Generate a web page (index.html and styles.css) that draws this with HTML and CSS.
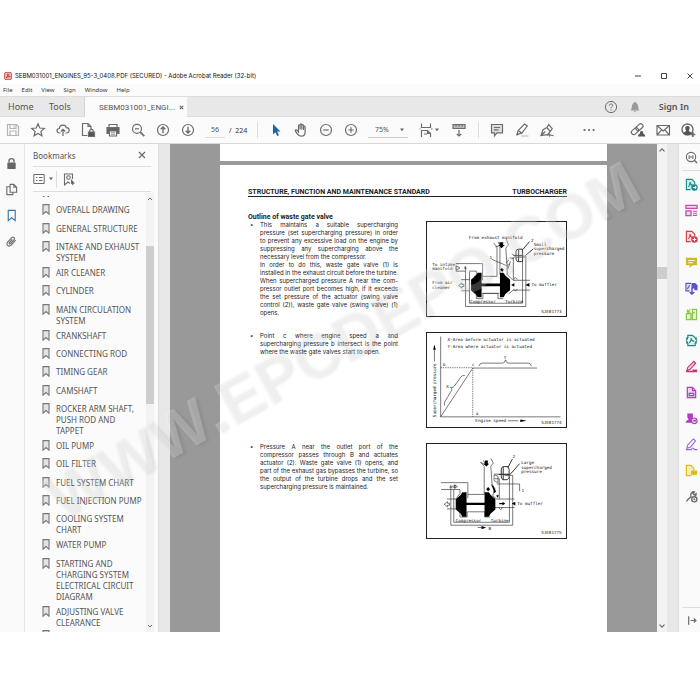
FILE: index.html
```html
<!DOCTYPE html>
<html lang="en">
<head>
<meta charset="utf-8">
<title>SEBM031001_ENGINES_95-3_0408.PDF (SECURED) - Adobe Acrobat Reader (32-bit)</title>
<link rel="stylesheet" href="styles.css">
</head>
<body>
<svg class="defs" aria-hidden="true">
  <symbol id="bm" viewBox="0 0 8 11"><path d="M1 .6h6v9.6L4 7.6 1 10.2z" fill="#e4e4e4" stroke="#777" stroke-width="1.1"/></symbol>
  <symbol id="caret" viewBox="0 0 6 4"><path d="M1 .5h4L3 3.2z" fill="#666"/></symbol>
</svg>
<div class="app">
  <header class="titlebar">
    <svg class="logo" viewBox="0 0 10 10"><rect x=".5" y=".5" width="9" height="9" rx="2" fill="#f3b0aa" stroke="#b5453f"/><path d="M2.5 7.3C4.5 6.500 5 4 4.800 2.500c1 2.500 1.800 3.300 3 3.300C6 5.500 4 6 2.500 7.300z" fill="none" stroke="#b02a25" stroke-width=".9"/></svg>
    <h1>SEBM031001_ENGINES_95-3_0408.PDF (SECURED) - Adobe Acrobat Reader (32-bit)</h1>
    <div class="winbtns">
      <button aria-label="Minimize"><svg viewBox="0 0 8 8"><path d="M1 4h6"/></svg></button>
      <button aria-label="Maximize"><svg viewBox="0 0 8 8"><path d="M1.500 1.500h5v5h-5z"/></svg></button>
      <button aria-label="Close"><svg viewBox="0 0 8 8"><path d="M1.500 1.500l5 5M6.500 1.500l-5 5"/></svg></button>
    </div>
  </header>
  <nav class="menubar">
    <button>File</button><button>Edit</button><button>View</button><button>Sign</button><button>Window</button><button>Help</button>
  </nav>
  <div class="tabs">
    <button class="tab home">Home</button>
    <button class="tab tools">Tools</button>
    <div class="tab active"><span>SEBM031001_ENGI...</span><button aria-label="Close tab"><svg viewBox="0 0 6 6"><path d="M1 1l4 4M5 1l-4 4"/></svg></button></div>
    <div class="account">
      <button aria-label="Help"><svg class="i14" viewBox="0 0 14 14"><circle cx="7" cy="7" r="5.600"/><path d="M5.400 5.600c0-2.200 3.300-2.100 3.300-.2C8.700 6.700 7 6.700 7 8.200M7 9.300v1.200"/></svg></button>
      <button aria-label="Notifications"><svg class="i14" viewBox="0 0 14 14"><path d="M2.500 10.500c1.300-1 1-3 1.500-4.800C4.400 4 5.500 3 6.200 2.800V2h1.600v.8C8.500 3 9.600 4 10 5.700c.5 1.800.2 3.800 1.500 4.800zM5.700 11.300h2.600L7 12.500z" fill="#999" stroke="none"/></svg></button>
      <button class="signin">Sign In</button>
    </div>
  </div>
  <div class="toolbar">
    <div class="group">
      <button aria-label="Save"><svg class="light" viewBox="0 0 16 16"><path d="M2.500 2.500h9l2 2v9h-11zM5 2.500v4h6v-4M5 13.500v-4.500h6v4.500M9 3.500v2"/></svg></button>
      <button aria-label="Star"><svg viewBox="0 0 16 16"><path d="M8 1.800l1.800 4.200 4.500.4-3.400 3 1 4.400L8 11.500l-3.900 2.300 1-4.400-3.400-3 4.500-.4z"/></svg></button>
      <button aria-label="Cloud upload"><svg viewBox="0 0 16 16"><path d="M5.500 11H4.600C1.200 11 1.200 6.700 4.300 6.500 4.500 2.200 10.500 2 11.300 5.600c3.800 0 3.800 5.400.2 5.400h-1M8 14V7.500M5.800 9.500L8 7.300l2.200 2.200"/></svg></button>
      <button aria-label="Protected file"><svg viewBox="0 0 16 16"><path d="M7.500 13.500h-5v-12h5.500l3 3v3M8 1.500v3h3"/><path d="M8.500 10h6v4.500h-6z" fill="#555"/><path d="M9.700 10V8.700c0-1.800 3.500-1.800 3.500 0V10"/></svg></button>
      <button aria-label="Print"><svg viewBox="0 0 16 16"><path d="M4 5V2.500h8V5"/><path d="M2 5.500h12v6H2z" fill="#666"/><path d="M4.500 9h7v5h-7z" fill="#fff"/><path d="M6 10.700h4M6 12.300h4" stroke-width=".7"/></svg></button>
      <button aria-label="Find"><svg viewBox="0 0 16 16"><circle cx="7" cy="6.800" r="4.500"/><path d="M10.300 10.200l4 4" stroke-width="1.700"/><path d="M5 6.800h4"/></svg></button>
      <button aria-label="Previous page"><svg viewBox="0 0 16 16"><circle cx="8" cy="8" r="5.500"/><path d="M8 11.200V5M5.700 7.300L8 5l2.300 2.300" stroke-width="1.400"/></svg></button>
      <button aria-label="Next page"><svg viewBox="0 0 16 16"><circle cx="8" cy="8" r="5.500"/><path d="M8 4.800V11M5.700 8.700L8 11l2.300-2.300" stroke-width="1.400"/></svg></button>
    </div>
    <div class="pager"><input aria-label="Page number" value="56"><span>/&nbsp; 224</span></div>
    <div class="group line">
      <button aria-label="Select"><svg viewBox="0 0 16 16"><path d="M5 2v10.500l2.400-2.200 1.800 3.800 1.800-.8-1.800-3.700h3.300z" fill="#1d66a5" stroke="none"/></svg></button>
      <button aria-label="Hand"><svg viewBox="0 0 16 16"><path d="M5.500 9V3.800c0-1.200 1.600-1.200 1.600 0V7.500 2.800c0-1.200 1.700-1.200 1.700 0v4.700-4c0-1.200 1.700-1.200 1.700 0V8 5c0-1.200 1.600-1.200 1.600 0v5.200c0 2.600-1.600 4-4 4-2.300 0-3-1-4-2.500L2.200 8.800c.2-1.300 1.600-1 2.200-.2L5.500 10z"/></svg></button>
      <button aria-label="Zoom out"><svg viewBox="0 0 16 16"><circle cx="8" cy="8" r="5.500"/><path d="M5.300 8h5.400"/></svg></button>
      <button aria-label="Zoom in"><svg viewBox="0 0 16 16"><circle cx="8" cy="8" r="5.500"/><path d="M5.300 8h5.400M8 5.300v5.400"/></svg></button>
    </div>
    <div class="zoom"><select aria-label="Zoom level"><option>75%</option></select><svg class="caret"><use href="#caret"/></svg></div>
    <div class="group view">
      <button class="fit" aria-label="Fit page"><svg viewBox="0 0 16 16"><path d="M3.500 1.500v4h9v-4M3.500 15V8.500h6l3 3V15M9.500 8.500v3h3M1.500 7h1M13 7h1.500M6 12h3"/></svg><svg class="caret"><use href="#caret"/></svg></button>
      <button aria-label="Scroll mode"><svg viewBox="0 0 16 16"><path d="M2 2.500h12v4H2z" fill="#bbb"/><path d="M5 2.500v2M8 2.500v2M11 2.500v2M8 8v6M5.800 12L8 14l2.200-2"/></svg></button>
    </div>
    <div class="group line">
      <button aria-label="Comment"><svg viewBox="0 0 16 16"><path d="M2.500 2.500h11v8.300H8l-2.500 3v-3h-3z" fill="#ddd"/><path d="M5 5.500h6M5 7.800h4.500"/></svg></button>
      <button aria-label="Highlight"><svg viewBox="0 0 16 16"><path d="M3 12.500l1.200-4L10.500 2l2.800 2-5.500 7.200z"/><path d="M5 9l2.500 2M2.500 13l2-1" stroke-width="1.500"/><path d="M7 14h7.500" stroke="#ccc" stroke-width="1.500"/></svg></button>
      <button aria-label="Sign"><svg viewBox="0 0 16 16"><path d="M2 13.500L4 7.700l4-2.200 3.300 4-2.700 3.200zM8 5.500l1.700-3 3.500 4-1.900 3M2 13.500l4.300-4M8.600 13.700c1-1.800 2-2.200 2.200 0 1-1.300 1.300 0 3.700 0"/></svg></button>
    </div>
    <button class="more" aria-label="More tools"><svg viewBox="0 0 16 16"><path d="M3.500 8h.1M8 8h.1M12.500 8h.1" stroke-width="2.200" stroke-linecap="round"/></svg></button>
    <div class="group share">
      <button aria-label="Share link"><svg viewBox="0 0 16 16"><g transform="rotate(-42 7 7)"><rect x="0" y="5" width="8" height="4.600" rx="2.300"/><rect x="6" y="5" width="8" height="4.600" rx="2.300"/></g><path d="M8 14.500c0-3 2-2 2-3.500 0-2.600 3.200-2.600 3.200 0 0 1.500 2 .5 2 3.500z" fill="#555" stroke="none"/></svg></button>
      <button aria-label="Email"><svg viewBox="0 0 16 16"><path d="M2 3.500h12.500v9.500H2zM2 3.500l6.200 5.500 6.300-5.500M2 13l4.700-5.200M14.500 13L9.700 7.800"/></svg></button>
      <button aria-label="Profile"><svg viewBox="0 0 16 16"><circle cx="7.500" cy="7.500" r="5.500" stroke-width="1.400"/><path d="M7.500 4c3 0 2.400 3.300 1.200 4.600.2 1.500 2.300 1 2.800 2.600-2 2.400-6 2.400-8 0 .500-1.600 2.600-1.100 2.800-2.600C5 7.300 4.500 4 7.500 4z" fill="#555" stroke="none"/><path d="M12.800 10v5M10.300 12.500h5" stroke-width="1.700"/></svg></button>
    </div>
  </div>

  <main class="body">
    <nav class="rail">
      <button aria-label="Security"><svg viewBox="0 0 14 14"><rect x="2.500" y="6" width="9" height="7" rx="1" fill="#666" stroke="none"/><path d="M4.300 6V4.300c0-3.400 5.400-3.400 5.400 0V6" stroke-width="1.500"/></svg></button>
      <button aria-label="Pages"><svg viewBox="0 0 14 14"><path d="M5.500 1.500h4l3 3v5.500h-7zM9.500 1.500v3h3M5.500 4H2v8.500h6.500V10"/></svg></button>
      <button aria-label="Bookmarks"><svg class="blue" viewBox="0 0 14 14"><path d="M3.500 1.500h7.500v11L7.200 9.500l-3.700 3z"/></svg></button>
      <button aria-label="Attachments"><svg viewBox="0 0 14 14"><path d="M11.500 5.500l-5 5.500c-2.500 2.500-6-.8-3.700-3.300l4.500-4.900c1.700-1.700 4 .6 2.500 2.300L5.900 9.400c-.8.800-2-.3-1.200-1.200l3.200-3.500"/></svg></button>
    </nav>
    <aside class="panel">
      <div class="phead"><h2>Bookmarks</h2><button aria-label="Close panel"><svg viewBox="0 0 8 8"><path d="M1 1l6 6M7 1L1 7" stroke-width="1.300"/></svg></button></div>
      <div class="ptools">
        <button class="opts" aria-label="Options"><svg viewBox="0 0 12 12"><path d="M.8 1.500h10.400v9H.8zM3 4.500h1.500M3 7.500h1.500M6 4.500h3.500M6 7.500h3.500"/></svg><svg class="caret"><use href="#caret"/></svg></button>
        <button class="find" aria-label="Find bookmark"><svg viewBox="0 0 12 13"><path d="M9.500 6V1H1.500v11l3.500-3 2 1.500"/><circle cx="5.500" cy="4.500" r="1.800"/><path d="M8 6l4 4.500-2 .2.600 2L8 10.500z" fill="#666" stroke="none"/></svg></button>
      </div>
      <div class="plist">
        <ul>
          <li class="cut-top"><svg viewBox="0 0 8 3"><path d="M1 1.500h1.500M5.500 1.500H7" stroke-width="1.200"/></svg></li>
          <li><svg><use href="#bm"/></svg><a href="#">OVERALL DRAWING</a></li>
          <li><svg><use href="#bm"/></svg><a href="#">GENERAL STRUCTURE</a></li>
          <li><svg><use href="#bm"/></svg><a href="#">INTAKE AND EXHAUST<br>SYSTEM</a></li>
          <li><svg><use href="#bm"/></svg><a href="#">AIR CLEANER</a></li>
          <li><svg><use href="#bm"/></svg><a href="#">CYLINDER</a></li>
          <li><svg><use href="#bm"/></svg><a href="#">MAIN CIRCULATION<br>SYSTEM</a></li>
          <li><svg><use href="#bm"/></svg><a href="#">CRANKSHAFT</a></li>
          <li><svg><use href="#bm"/></svg><a href="#">CONNECTING ROD</a></li>
          <li><svg><use href="#bm"/></svg><a href="#">TIMING GEAR</a></li>
          <li><svg><use href="#bm"/></svg><a href="#">CAMSHAFT</a></li>
          <li><svg><use href="#bm"/></svg><a href="#">ROCKER ARM SHAFT,<br>PUSH ROD AND<br>TAPPET</a></li>
          <li><svg><use href="#bm"/></svg><a href="#">OIL PUMP</a></li>
          <li><svg><use href="#bm"/></svg><a href="#">OIL FILTER</a></li>
          <li><svg><use href="#bm"/></svg><a href="#">FUEL SYSTEM CHART</a></li>
          <li><svg><use href="#bm"/></svg><a href="#">FUEL INJECTION PUMP</a></li>
          <li><svg><use href="#bm"/></svg><a href="#">COOLING SYSTEM<br>CHART</a></li>
          <li><svg><use href="#bm"/></svg><a href="#">WATER PUMP</a></li>
          <li><svg><use href="#bm"/></svg><a href="#">STARTING AND<br>CHARGING SYSTEM<br>ELECTRICAL CIRCUIT<br>DIAGRAM</a></li>
          <li><svg><use href="#bm"/></svg><a href="#">ADJUSTING VALVE<br>CLEARANCE</a></li>
          <li class="cut-end"><svg><use href="#bm"/></svg></li>
        </ul>
        <div class="sbar side">
          <svg viewBox="0 0 8 6"><path d="M2 4.500l2-2 2 2"/></svg>
          <div class="gap-a"></div><div class="thumb"></div><div class="gap-b"></div>
          <svg viewBox="0 0 8 6"><path d="M2 1.500l2 2 2-2"/></svg>
        </div>
      </div>
    </aside>
    <div class="strip"></div>
    <section class="view-area">
      <div class="prev"></div>
      <article class="page">
        <header class="runhead"><span>STRUCTURE, FUNCTION AND MAINTENANCE STANDARD</span><span>TURBOCHARGER</span></header>
        <div class="row first">
          <div class="copy">
            <h3>Outline of waste gate valve</h3>
            <div class="item"><p>
              <span>This maintains a suitable supercharging</span>
              <span>pressure (set supercharging pressure) in order</span>
              <span>to prevent any excessive load on the engine by</span>
              <span>suppressing any supercharging above the</span>
              <span class="end">necessary level from the compressor.</span>
              <span>In order to do this, waste gate valve (1) is</span>
              <span>installed in the exhaust circuit before the turbine.</span>
              <span>When supercharged pressure A near the com-</span>
              <span>pressor outlet port becomes high, if it exceeds</span>
              <span>the set pressure of the actuator (swing valve</span>
              <span>control (2)), waste gate valve (swing valve) (1)</span>
              <span class="end">opens.</span></p></div>
          </div>
          <svg class="fig" viewBox="18 124 423 287" role="img" aria-label="Waste gate valve closed">
            <g class="ln">
              <path d="M105 251h82v39h44v-90l-10-12M105 274h30M146 274h22v10l-14 16v34l14 12v12h20v-16h46v16h16M187 290v12M135 262v120h184V228h-27M147 276v96h162V232M122 300h26M122 334h26M240 284v-84M262 264l-4-60 8-10-8-22M262 264v20l18 18h52M266 344l14-12h52M281 300v-66h-12M282 328c0 8 10 8 10 0M282 300c0-8 10-8 10 0M234 184l6 12-14 4M272 244l-8 24M290 232h26M276 222l12 6-12 10M268 240c-14 6-6 18 2 14M215 238l52 22M186 342h52"/>
              <path d="M106 258l12 6-12 7zM114 318l10-8v5h6v6h-6v5z"/>
              <path d="M330 184l-20 24M342 206l-24 20" class="hv"/>
              <path d="M289 214q0-7 8-7h12v38h-14q-6-2-6-8zM297 207v38M281 226h28" class="hv"/>
            </g>
            <path d="M152 300l14-12 6-9h12v75h-12l-6-10-14-12zM184 312h56v8h-56zM271 300l-14-12-6-9h-11v75h11l6-10 14-12zM238 186h12v8h5l-10 10-10-10h4zM241 270l5-6 6 6-5 7zM274 316l10-6v12zM318 316l12-6v12z" fill="#000"/>
            <g class="tx"><text x="145" y="175">From exhaust manifold</text><text x="33" y="257">To intake</text><text x="33" y="272">manifold</text><text x="33" y="314">From air</text><text x="33" y="329">cleaner</text><text x="343" y="196">Small</text><text x="343" y="210">supercharged</text><text x="343" y="224">pressure</text><text x="336" y="320">To muffler</text><text x="149" y="372">Compressor</text><text x="256" y="372">Turbine</text><text x="208" y="238">1</text><text x="335" y="184">2</text><text x="130" y="268">A</text><text x="366" y="401">SJE01773</text></g>
          </svg>
        </div>
        <div class="row">
          <div class="copy">
            <div class="item"><p>
              <span>Point c where engine speed a and</span>
              <span>supercharging pressure b intersect is the point</span>
              <span class="end">where the waste gate valves start to open.</span></p></div>
          </div>
          <svg class="fig" viewBox="18 21 423 287" role="img" aria-label="Supercharged pressure against engine speed">
            <g class="ln">
              <path d="M59 32v245h366M59 277l98-149h196M40 108V70M264 289h32"/>
              <path d="M59 127h98v150" stroke-dasharray="4 3"/>
              <path d="M176 122q2-9 10-9h62q7 0 9-10 2 10 9 10h60q8 0 10 9M71 243q-3-8 3-16l18-30q4-7-3-10 9 2 12-4l20-28q5-6 12-4"/>
            </g>
            <path d="M40 56l4 16h-8zM322 289l-20-4v8z" fill="#000"/>
            <g class="tx"><text x="80" y="46">X-Area before actuator is actuated</text><text x="80" y="66">Y-Area where actuator is actuated</text><text x="66" y="121">b</text><text x="155" y="121">c</text><text x="166" y="272">a</text><text x="252" y="100">Y</text><text x="76" y="188">X</text><text x="165" y="294">Engine speed</text><text x="366" y="300">SJE01774</text><text transform="translate(46 278) rotate(-90)">Supercharged pressure</text></g>
          </svg>
        </div>
        <div class="row">
          <div class="copy">
            <div class="item"><p>
              <span>Pressure A near the outlet port of the</span>
              <span>compressor passes through B and actuates</span>
              <span>actuator (2). Waste gate valve (1) opens, and</span>
              <span>part of the exhaust gas bypasses the turbine, so</span>
              <span>the output of the turbine drops and the set</span>
              <span class="end">supercharging pressure is maintained.</span></p></div>
          </div>
          <svg class="fig" viewBox="18 28 423 287" role="img" aria-label="Waste gate valve open">
            <g class="ln">
              <path d="M60 146h82v36h50V96l-10-12M60 167h58v12l-12 16v32l12 12v12h22v-16h54v16h16M142 182v12M90 158v118h189V124h-25M99 167v100h170V128M78 196h28M78 226h28M216 150l-4-54 8-10-8-14M216 150l8 14-6 22 12 10h54M224 222h60M238 196v-62h-14M238 222c0 8 8 8 8 0M190 78l6 14-16-8M222 122l12 4v20l-12-6zM222 120h48M230 150h70v22"/>
              <path d="M95 158l8-5v10zM110 158l-8-5v10zM70 212l10-8v5h6v6h-6v5z"/>
              <path d="M278 74l-14 26M300 88l-30 34" class="hv"/>
              <path d="M244 104q2-7 8-7h12l4 8v26l-6 6h-14l-4-8zM250 97v40M236 121h32" class="hv"/>
            </g>
            <path d="M106 196l14-12 5-9h13v75h-13l-5-10-14-12zM138 207h55v7h-55zM226 196l-14-12-6-9h-13v75h13l6-10 14-12zM194 78h9v10h4l-8 9-9-9h4zM198 166l6-7 6 7-6 6zM212 150c8 6 14 14 16 24l-6 4c0-10-6-18-10-28zM228 186l8-3-2 9zM238 208h10v-4l8 6-8 6v-4h-10zM276 210l11-6v12zM172 282h12v-4l14 5-14 5v-4h-12z" fill="#000"/>
            <g class="tx"><text x="305" y="90">Large</text><text x="305" y="103">supercharged</text><text x="305" y="116">pressure</text><text x="293" y="214">To muffler</text><text x="105" y="267">Compressor</text><text x="212" y="267">Turbine</text><text x="306" y="176">1</text><text x="278" y="70">2</text><text x="205" y="291">B</text><text x="86" y="163">A</text><text x="366" y="304">SJE01775</text></g>
          </svg>
        </div>
      </article>
    </section>
    <div class="sbar doc">
      <svg viewBox="0 0 8 6"><path d="M2 4.500l2-2 2 2"/></svg>
      <div class="gap-a"></div><div class="thumb"></div><div class="gap-b"></div>
      <svg viewBox="0 0 8 6"><path d="M2 1.500l2 2 2-2"/></svg>
    </div>
    <div class="strip"></div>
    <nav class="rail right">
      <button aria-label="Search tools"><svg viewBox="0 0 14 14"><circle cx="6.500" cy="6.500" r="5"/><path d="M10 10l3 3" stroke-width="1.600"/><path d="M4.500 4.500v4M8.500 4.500v4M6.500 5.500v2"/></svg></button>
      <button class="ruled" aria-label="Export PDF"><svg class="teal" viewBox="0 0 14 14"><path d="M6 12.500H1.500v-11h6l3 3V7" fill="#cfeae8"/><path d="M3.500 9.500C5.500 8 5.500 6 5.300 4.500 5.800 7 7 8 8.500 8"/><circle cx="10.200" cy="10.200" r="3.500" fill="#168a88" stroke="none"/><path d="M8.500 10.200h3M10.700 9l1.200 1.200-1.200 1.200" stroke="#fff"/></svg></button>
      <button aria-label="Organize Pages"><svg class="pink" viewBox="0 0 14 14"><path d="M1 1.500h12v3.300H1zM1 7.500h5.500v5H1z" fill="#f1d3ec" stroke-width="1.400"/><path d="M8.500 7.800H13M8.500 10H13M8.500 12.200H13"/></svg></button>
      <button aria-label="Create PDF"><svg class="red" viewBox="0 0 14 14"><path d="M6 12.500H1.500v-11h6l3 3V7" fill="#f8dadd"/><path d="M3.500 9.500C5.500 8 5.500 6 5.300 4.500 5.800 7 7 8 8.500 8"/><circle cx="10.200" cy="10.200" r="3.500" fill="#d13c4b" stroke="none"/><path d="M8.300 10.200h3.800M10.200 8.300v3.800" stroke="#fff"/></svg></button>
      <button aria-label="Comment tool"><svg viewBox="0 0 14 14"><path d="M1 2h12v8H8l-3 3v-3H1z" fill="#d2b921" stroke="none"/><path d="M3.500 4.800h7M3.500 7.200h5" stroke="#fff"/></svg></button>
      <button aria-label="Combine Files"><svg class="indigo" viewBox="0 0 14 14"><path d="M5 9.500H1v-8h5.500" fill="#dedcf5"/><path d="M2.500 7.500L5 3.500"/><path d="M7 1h4l2.500 2.500V9H10V7H7z" fill="#5a54c4" stroke="none"/><path d="M7.500 6v7M5 10.700L7.500 13l2.500-2.300" stroke-width="1.600"/></svg></button>
      <button aria-label="Compress layout"><svg class="green" viewBox="0 0 14 14"><path d="M8 1.500h4.500v11H8zM1.500 6h5v6.500h-5z" fill="#e4f3cf" stroke-width="1.300"/><path d="M6 1.500L3 3.800M2.500 1.500v3H6M8 5h2.500"/></svg></button>
      <button aria-label="Compress PDF"><svg class="teal" viewBox="0 0 14 14"><path d="M3 4V1.500h5l3 2.500M3 10v2.500h8V10M1 4.500h2L1.500 7 3 9.500H1M13 4.500h-2L12.500 7 11 9.500h2" fill="#cfeae8"/><path d="M4.500 9.500C6.500 8 7 6.500 6.500 4.500 7 7 8.500 8 10 8"/></svg></button>
      <button aria-label="Edit PDF"><svg class="magenta" viewBox="0 0 14 14"><path d="M2 11.500l1-3.500 6.500-6.500 2 2L5.500 10z" fill="#f4cfe0"/><path d="M1 12.300h12M8 11h5" stroke-width="1.600"/></svg></button>
      <button aria-label="Fill form"><svg class="violet" viewBox="0 0 14 14"><path d="M2.500 1.500H8l3.500 3.500v7.500h-9z" fill="#eed6f3" stroke-width="1.300"/><path d="M8 1.500V5h3.500M4.500 8h5v2.300h-5z" stroke-width="1.300"/></svg></button>
      <button aria-label="Send for Comments"><svg class="violet" viewBox="0 0 14 14"><path d="M2.500 1.500h6v5L7 8l1 3.500H.5C1 9 3 9 4 8L2.500 6z" fill="#b03cc0" stroke="none"/><circle cx="10" cy="9.500" r="3" fill="#f2dff5"/><path d="M8.500 9.500h3l-1-1.200"/></svg></button>
      <button aria-label="Fill and Sign"><svg class="purple" viewBox="0 0 14 14"><path d="M2 11l1-3.500L9 1l2.300 2-5.500 7zM1 12.500h6c1.500-3.500 2.500-.5 3 0h3.500"/></svg></button>
      <button aria-label="Send file"><svg class="gold" viewBox="0 0 14 14"><path d="M7 12.500H1.500v-11h5l3 3V7" fill="#f6ecb5" stroke-width="1.300"/><path d="M6.500 7h6.500v4.500h-2.500L8.800 13v-1.500H6.500z" fill="#d9bd1c" stroke="none"/></svg></button>
      <button aria-label="More tools"><svg viewBox="0 0 14 14"><path d="M1.500 12L7 6.500M6.500 6.500C5.500 4 7.500 1.500 10 2L8.500 3.700l1.500 1.600L12 4c.3 1.300-.3 2-1 2.700" stroke-width="1.500"/><circle cx="10" cy="10" r="2.800" stroke-width="1.500"/><path d="M8.800 10h2.400M10 8.800v2.400" stroke-width=".8"/></svg></button>
      <button class="last" aria-label="Collapse"><svg viewBox="0 0 14 14"><path d="M4 2.500v9M6 7h6M9.500 4.800L11.800 7 9.500 9.200" stroke-width="1.300"/></svg></button>
    </nav>
  </main>
  <div class="watermark">WWW.EPCDEPO.COM</div>
</div>
</body>
</html>
```
FILE: styles.css
```css
*, *::before { box-sizing: border-box; }
body {
  margin: 0;
  background: #fff;
  color: #555;
  font-family: "Noto Sans", "Open Sans", sans-serif;
  font-size: 8px;
}
button {
  padding: 0;
  border: 0;
  background: none;
  color: inherit;
  font: inherit;
  display: flex;
  align-items: center;
  justify-content: center;
}
h1, h2, h3, p, ul { margin: 0; padding: 0; font: inherit; }
svg { display: block; fill: none; stroke: #6c6c6c; flex: none; }
.defs { position: absolute; width: 0; height: 0; }
.caret { width: 6px; height: 4px; stroke: none; }

.app {
  position: relative;
  display: flex;
  flex-direction: column;
  height: 100vh;
  padding: 67px 0 68px;
  overflow: hidden;
}

/* Title and menus */
.titlebar { display: flex; align-items: center; height: 17px; gap: 3px; padding-left: 4px; color: #111; font-family: Inter, sans-serif; font-size: 6px; }
.logo { width: 8px; height: 8px; }
.titlebar h1 { white-space: nowrap; }
.winbtns { display: flex; margin-left: auto; }
.winbtns button { width: 26px; height: 17px; justify-content: flex-end; padding-right: 6px; }
.winbtns svg { width: 8px; height: 8px; stroke: #444; }
.menubar { display: flex; align-items: center; gap: 9px; height: 12px; padding-left: 3px; background: #fbfbfb; font-size: 6px; color: #333; }

/* Tabs */
.tabs { display: flex; height: 21px; border-top: 1px solid #ddd; border-bottom: 1px solid #dcdcdc; background: #e8e8e8; font-size: 9px; }
.tab { display: flex; align-items: center; }
.home { padding-left: 8px; width: 45px; justify-content: flex-start; }
.tools { width: 40px; padding-left: 4px; justify-content: flex-start; border-right: 1px solid #d2d2d2; }
.active { width: 102px; padding-left: 14px; gap: 4px; background: #fbfbfb; font-family: Roboto, sans-serif; font-size: 8px; margin-bottom: -1px; }
.active svg { width: 5px; height: 5px; stroke-width: 1.5; }
.account { display: flex; align-items: center; margin-left: auto; gap: 10px; padding-right: 11px; }
.i14 { width: 14px; height: 14px; }
.signin { font-weight: 600; margin-left: 7px; }

/* Toolbar */
.toolbar { display: flex; align-items: center; height: 27px; background: #fbfbfb; border-bottom: 1px solid #d8d8d8; }
.toolbar svg:not(.caret) { width: 16px; height: 16px; stroke-width: 1.2; }
.toolbar .light { stroke: #b5b5b5; }
.group { display: flex; }
.group button { width: 25px; height: 16px; }
.pager { display: flex; align-items: center; gap: 4px; width: 57px; padding-left: 5px; font-size: 7px; white-space: nowrap; color: #333; }
.pager input { width: 20px; height: 16px; padding: 0; border: 0; border-bottom: 1px solid #ddd; background: none; font: inherit; color: #555; text-align: center; }
.line { border-left: 1px solid #ddd; padding-left: 5px; }
.zoom { display: flex; align-items: center; width: 40px; margin-left: 5px; padding-right: 3px; border-bottom: 1px solid #ccc; height: 16px; }
.zoom select { appearance: none; flex: 1; min-width: 0; border: 0; padding: 0 0 0 7px; background: none; font: inherit; font-size: 7px; color: #555; }
.view { gap: 4px; margin-left: 8px; padding-right: 7px; }
.group .fit { width: 26px; }
.more { margin-left: 22px; }
.share { margin-left: auto; }

/* Body */
.body { display: flex; flex: 1; min-height: 0; background: #999; }
.rail { display: flex; flex-direction: column; width: 25px; padding: 6px 2px 0 0; background: #fafafa; border-right: 1px solid #e4e4e4; }
.rail button { height: 26px; }
.rail svg { width: 13px; height: 13px; stroke-width: 1.2; }
.rail .blue { stroke: #2c75b3; }
.right { width: 22px; padding: 0 0 0 3px; border-right: 0; border-left: 1px solid #ddd; }
.right .ruled { height: 27px; border-top: 1px solid #ddd; }
.right .last { margin-top: auto; border-top: 1px solid #ddd; height: 25px; }
.rail .teal { stroke: #168a88; }
.rail .pink { stroke: #c24eb0; }
.rail .red { stroke: #d13c4b; }
.rail .indigo { stroke: #5a54c4; }
.rail .green { stroke: #8fc34e; }
.rail .magenta { stroke: #c92f78; }
.rail .violet { stroke: #b03cc0; }
.rail .purple { stroke: #9468cf; }
.rail .gold { stroke: #d9bd1c; }

.panel { display: flex; flex-direction: column; width: 134px; background: #fbfbfb; border-right: 1px solid #ddd; }
.phead { display: flex; align-items: center; justify-content: space-between; height: 23px; margin: 0 7px 0 8px; padding-right: 5px; border-bottom: 1px solid #ddd; }
.phead svg { width: 8px; height: 8px; }
.ptools { display: flex; align-items: center; height: 25px; margin: 0 7px 0 8px; border-bottom: 1px solid #ddd; }
.opts { gap: 3px; width: 24px; height: 17px; justify-content: flex-start; border-right: 1px solid #ddd; }
.opts > svg:first-child { width: 12px; height: 12px; }
.find { margin-left: 6px; }
.find svg { width: 12px; height: 13px; stroke-width: 1.1; }
.plist { display: flex; flex: 1; min-height: 0; overflow: hidden; }
.plist ul { display: flex; flex: 1; min-width: 0; flex-direction: column; justify-content: space-between; list-style: none; padding-left: 17px; }
.plist li { display: flex; gap: 6px; min-height: 18px; padding: 2px 0; line-height: 11px; white-space: nowrap; }
.plist li svg { width: 8px; height: 11px; }
.plist a { color: #555; text-decoration: none; }
.plist .cut-top { min-height: 10px; height: 10px; }
.plist .cut-top svg { height: 3px; margin-top: 1px; }
.plist .cut-end { min-height: 2px; height: 2px; padding: 0; overflow: hidden; }

.sbar { display: flex; flex-direction: column; align-items: stretch; width: 10px; background: #f3f3f3; }
.sbar svg { height: 11px; }
.sbar.side { width: 8px; margin: 1px 4px 0 0; }
.thumb { background: #cdcdcd; }
.side .gap-a { flex: 42; }
.side .thumb { flex: 157; }
.side .gap-b { flex: 216; }
.doc .gap-a { flex: 112; }
.doc .thumb { flex: 12; }
.doc .gap-b { flex: 343; }
.strip { width: 11px; background: #e8e8e8; }

/* Document */
.view-area { flex: 1; min-width: 0; display: flex; flex-direction: column; padding: 0 50px; overflow: hidden; background: #999; }
.prev { height: 17px; margin-bottom: 4px; background: #fff; flex: none; }
.page { flex: 1; padding: 24px 40px 0 28px; background: #fff; color: #222; font-family: Inter, "Liberation Sans", sans-serif; font-size: 6px; line-height: 8px; }
.runhead { display: flex; justify-content: space-between; border-bottom: 1px solid #222; font: bold 7px/7px Roboto, sans-serif; white-space: nowrap; }
.row { display: flex; justify-content: space-between; align-items: flex-start; margin-bottom: 15px; }
.row.first { margin-top: 24px; }
.first .copy { margin-top: -8px; }
.copy { width: 150px; }
.copy h3 { font: bold 7px/8px Roboto, sans-serif; }
.item { display: flex; }
.item::before { content: "•"; width: 12px; padding-left: 2px; flex: none; }
.item p { flex: 1; min-width: 0; }
.item span { display: block; text-align-last: justify; white-space: nowrap; }
.item .end { text-align-last: left; }
.fig { width: 141px; height: 96px; border: 1px solid #222; }
.ln { stroke: #333; stroke-width: 2; }
.hv { stroke-width: 3; }
.fig path[fill] { stroke: none; }
.tx { fill: #111; stroke: none; font-family: "DejaVu Sans Mono", monospace; font-size: 13px; }

/* Diagonal stamp over the whole window */
.watermark {
  position: absolute;
  left: 61px;
  bottom: 177px;
  transform: rotate(-29deg);
  transform-origin: left bottom;
  pointer-events: none;
  white-space: nowrap;
  font: bold 63px/48px "Liberation Sans", sans-serif;
  font-kerning: none;
  color: rgba(255, 255, 255, 0.22);
  text-shadow: 2px 2px 3px rgba(0, 0, 0, 0.08);
}
```
